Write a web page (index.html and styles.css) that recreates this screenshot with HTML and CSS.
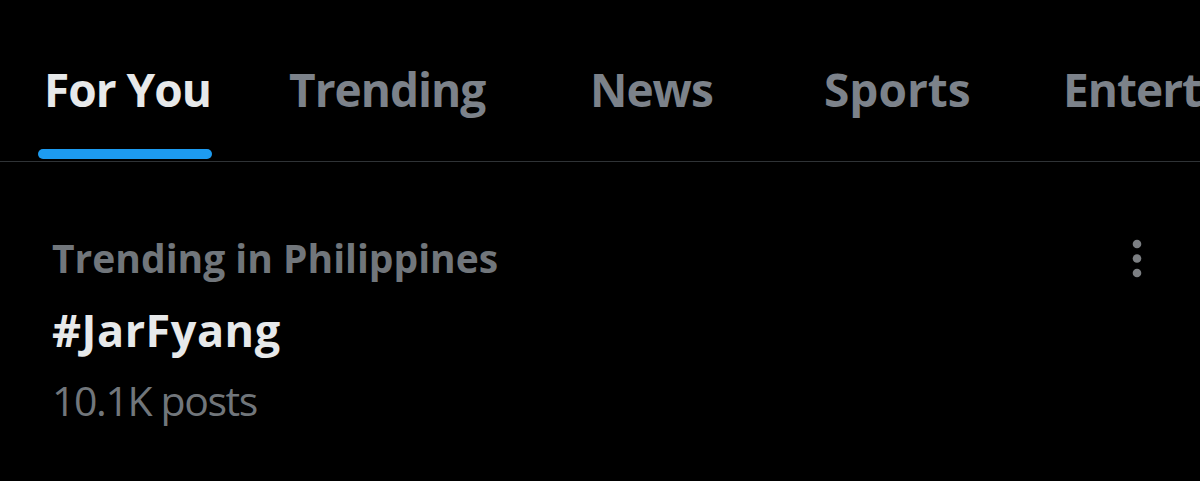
FILE: index.html
```html
<!DOCTYPE html>
<html>
<head>
<meta charset="utf-8">
<link rel="stylesheet" href="styles.css">
</head>
<body>
<div class="page">
  <nav class="tabs">
    <div class="tab tab-active tab-foryou"><span class="tab-label">For You</span><span class="indicator"></span></div>
    <div class="tab tab-trending"><span class="tab-label">Trending</span></div>
    <div class="tab tab-news"><span class="tab-label">News</span></div>
    <div class="tab tab-sports"><span class="tab-label">Sports</span></div>
    <div class="tab"><span class="tab-label">Entertainment</span></div>
  </nav>
  <section class="trend">
    <div class="trend-text">
      <div class="trend-context">Trending in Philippines</div>
      <div class="trend-name">#JarFyang</div>
      <div class="trend-count">10.1K posts</div>
    </div>
    <div class="more">
      <svg width="12" height="42" viewBox="0 0 12 42"><circle cx="6" cy="6" r="4.3" fill="#7c7f83"/><circle cx="6" cy="20.5" r="4.3" fill="#7c7f83"/><circle cx="6" cy="35" r="4.3" fill="#7c7f83"/></svg>
    </div>
  </section>
</div>
</body>
</html>
```
FILE: styles.css
```css
html, body {
  margin: 0;
  padding: 0;
  background: #000;
}
.page {
  width: 1200px;
  height: 481px;
  overflow: hidden;
  background: #000;
  font-family: "Open Sans", "Noto Sans", sans-serif;
}
.tabs {
  display: flex;
  flex-wrap: nowrap;
  height: 161px;
  padding-left: 44px;
  border-bottom: 1px solid #2f3336;
  white-space: nowrap;
}
.tab {
  position: relative;
  flex: none;
  padding-top: 57px;
  font-size: 46px;
  font-weight: 700;
  letter-spacing: -1px;
  color: #7c828a;
  line-height: 64px;
}
.tab-active { color: #e7e9ea; }
.tab-foryou { width: 245px; }
.tab-trending { width: 301px; }
.tab-news { width: 234px; }
.tab-sports { width: 239px; letter-spacing: 0; }
.indicator {
  position: absolute;
  left: -6px;
  width: 174px;
  bottom: 2px;
  height: 10px;
  border-radius: 5px;
  background: #1d9bf0;
}
.trend {
  display: flex;
  justify-content: space-between;
  padding: 70px 57px 0 52px;
}
.trend-context {
  font-size: 39px;
  font-weight: 700;
  letter-spacing: 0;
  color: #71767b;
  line-height: 52px;
}
.trend-name {
  font-size: 45px;
  font-weight: 700;
  letter-spacing: 0.5px;
  color: #e7e9ea;
  line-height: 64px;
  margin-top: 14px;
}
.trend-count {
  font-size: 41px;
  font-weight: 400;
  letter-spacing: -1.4px;
  color: #71767b;
  line-height: 56px;
  margin-top: 10px;
}
.more {
  padding-top: 6px;
}
```
